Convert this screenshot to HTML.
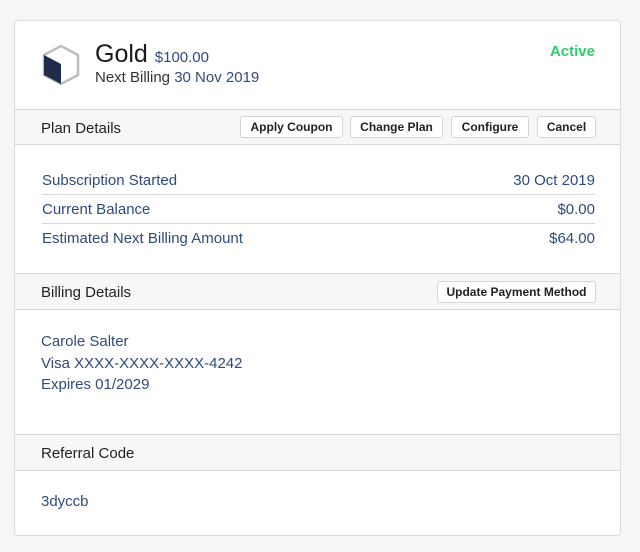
<!DOCTYPE html><html><head><style>
body{margin:0;background:#f6f6f6;font-family:"Liberation Sans",sans-serif;width:640px;height:552px;overflow:hidden}
.card{position:absolute;left:14px;top:20px;width:607px;height:516px;background:#fff;border:1px solid #dcdcdc;border-radius:4px;box-sizing:border-box}
.abs{position:absolute}
.sec{position:absolute;left:0;right:0;height:36px;background:#f7f7f7;border-top:1px solid #d6d6d6;border-bottom:1px solid #d6d6d6;box-sizing:border-box}
.sec .t{position:absolute;left:26px;top:10px;font-size:15px;color:#222}
.btn{position:absolute;top:6px;height:22px;border:1px solid #d4d4d4;border-radius:3px;background:#fff;font-size:12px;font-weight:bold;color:#222;box-sizing:border-box;text-align:center;line-height:20px}
.blue{color:#2f4a7d}
.row{position:absolute;left:27px;width:553px;font-size:15px;color:#2f4a7d;height:29px;box-sizing:border-box;padding-top:6px}
.row span{float:right}
</style></head><body>
<div class="card">
<svg class="abs" style="left:27px;top:23px" width="40" height="42" viewBox="0 0 40 42"><polygon points="19,2 36,11 36,31 19,40 2,31 2,11" fill="none" stroke="#bdbdbd" stroke-width="2.5"/><polygon points="2,11 19,20 19,40 2,31" fill="#1f2d4a"/></svg>
<div class="abs" style="left:80px;top:19px;font-size:25px;color:#1a1a1a">Gold <span class="blue" style="font-size:15px">$100.00</span></div>
<div class="abs" style="left:80px;top:48px;font-size:15px;color:#333">Next Billing <span class="blue">30 Nov 2019</span></div>
<div class="abs" style="right:25px;top:22px;font-size:15px;font-weight:bold;color:#2ecc71">Active</div>
<div class="sec" style="top:88px"><div class="t">Plan Details</div>
<div class="btn" style="left:225px;width:103px">Apply Coupon</div>
<div class="btn" style="left:335px;width:93px">Change Plan</div>
<div class="btn" style="left:436px;width:78px">Configure</div>
<div class="btn" style="left:522px;width:59px">Cancel</div></div>
<div class="row" style="top:145px;border-bottom:1px solid #d6d6d6">Subscription Started<span>30 Oct 2019</span></div>
<div class="row" style="top:174px;border-bottom:1px solid #d6d6d6">Current Balance<span>$0.00</span></div>
<div class="row" style="top:203px">Estimated Next Billing Amount<span>$64.00</span></div>
<div class="sec" style="top:252px;height:37px"><div class="t">Billing Details</div>
<div class="btn" style="left:422px;width:159px;top:7px">Update Payment Method</div></div>
<div class="abs blue" style="left:26px;top:310px;font-size:15px;line-height:21.5px">Carole Salter<br>Visa XXXX-XXXX-XXXX-4242<br>Expires 01/2029</div>
<div class="sec" style="top:413px;height:37px"><div class="t">Referral Code</div></div>
<div class="abs blue" style="left:26px;top:472px;font-size:15px">3dyccb</div>
</div>
</body></html>
